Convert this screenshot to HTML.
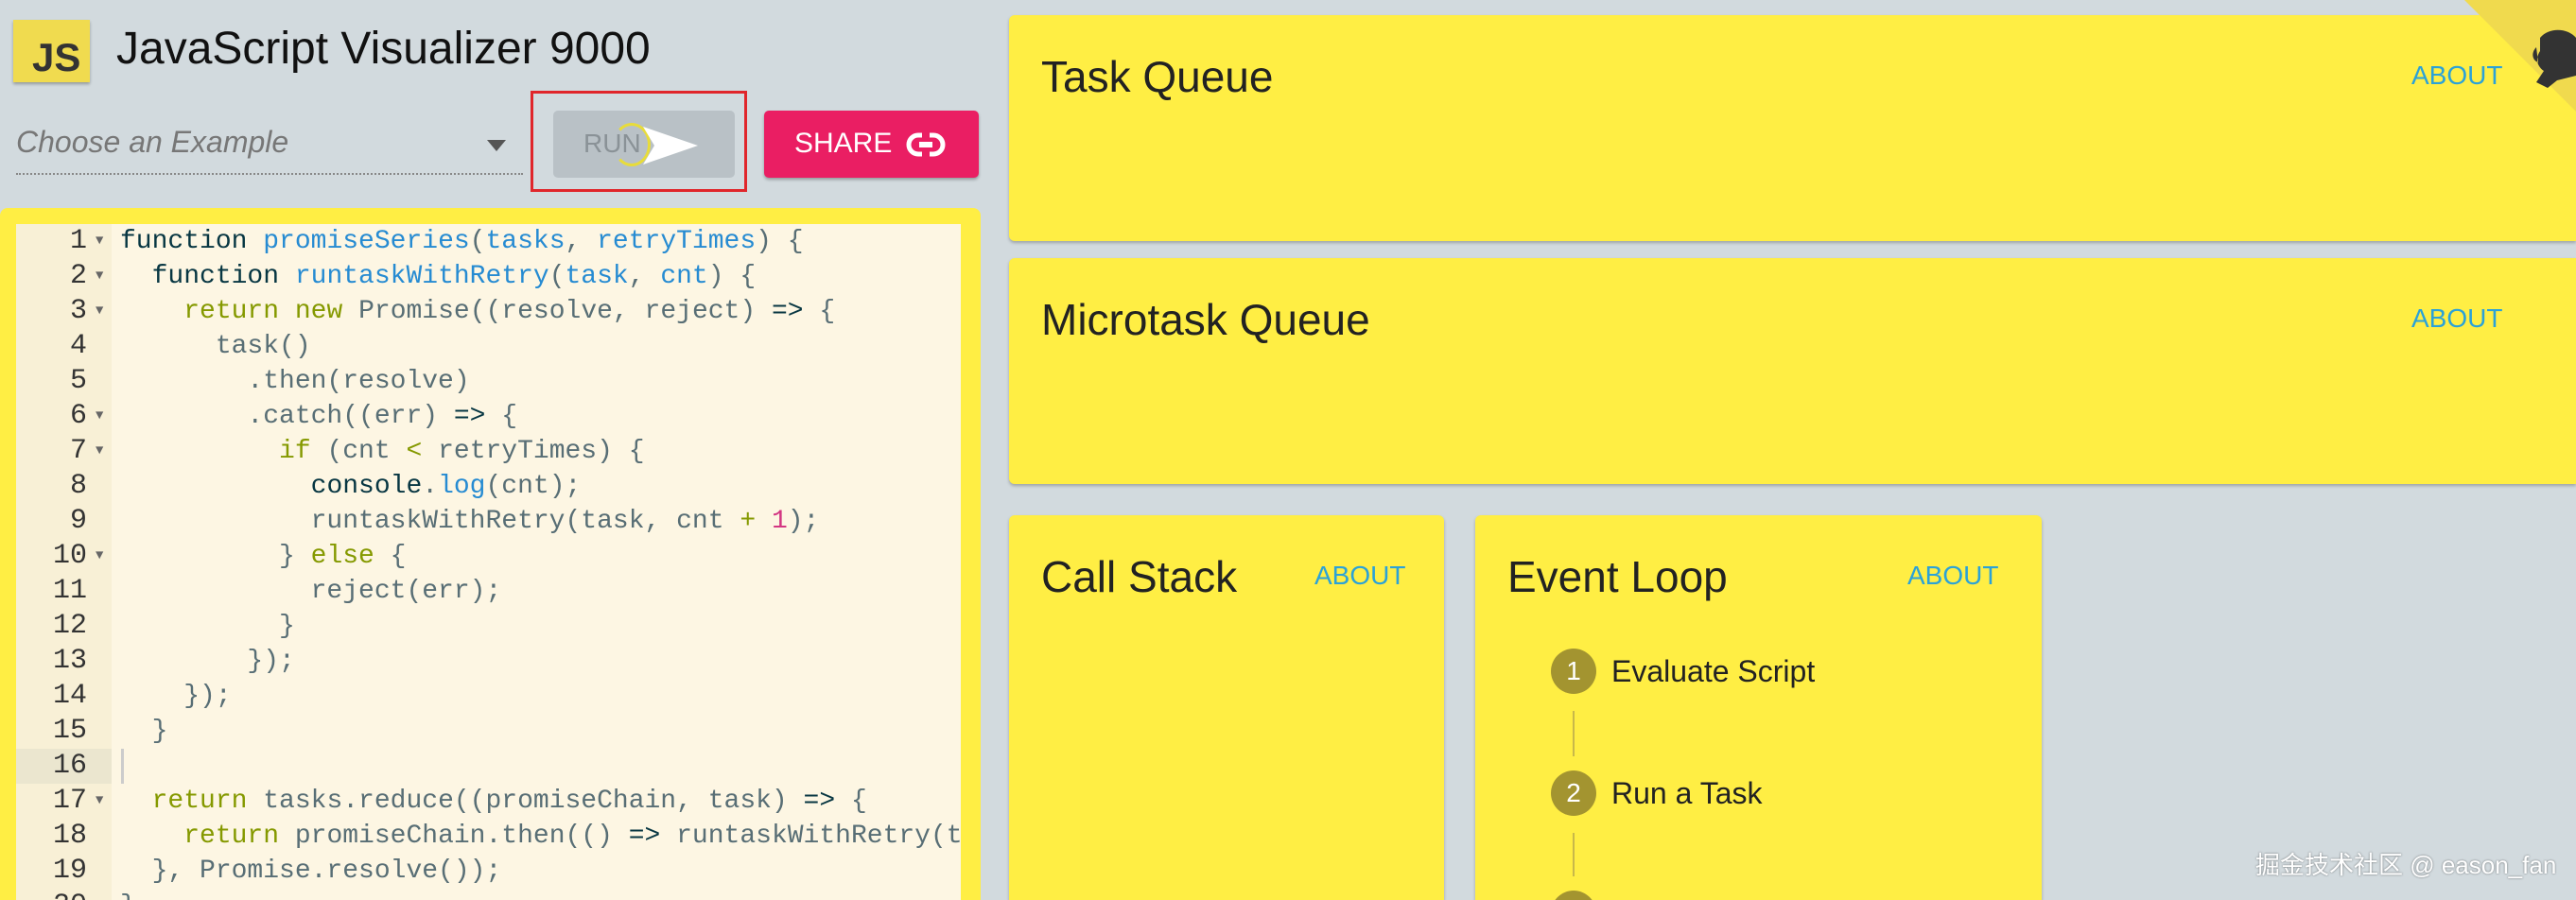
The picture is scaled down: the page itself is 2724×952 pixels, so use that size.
<!DOCTYPE html>
<html style="width:2724px;height:952px;overflow:hidden"><head><meta charset="utf-8"><style>
*{margin:0;padding:0;box-sizing:border-box}
body{width:2724px;height:952px;overflow:hidden;background:#d2dade;font-family:"Liberation Sans",sans-serif;position:relative}
.abs{position:absolute}
.card{position:absolute;background:#ffee44;border-radius:6px;box-shadow:0 2px 3px rgba(0,0,0,.25)}
.card h2{position:absolute;left:34px;font-weight:normal;font-size:46px;color:#222;line-height:1}
.about{position:absolute;font-size:28px;color:#2ba2d8;line-height:1}
.code{position:absolute;left:17px;top:237px;width:999px;height:715px;background:#fdf6e3;overflow:hidden;font-family:"Liberation Mono",monospace;font-size:28px}
.gut{position:absolute;left:0;top:0;width:101px;height:100%;background:#f8f0d6}
.ln{position:absolute;left:0;width:101px;height:37px;line-height:37px;color:#333;font-size:30px}
.ln span{position:absolute;right:26px}
.ln i{position:absolute;left:84px;font-style:normal;font-size:14px;color:#666}
.l{position:absolute;left:110px;height:37px;line-height:37px;white-space:pre;color:#586e75}
.k{color:#859900}.f{color:#268bd2}.d{color:#073642}.n{color:#d33682}
.step{position:absolute;left:1640px;width:48px;height:48px;border-radius:50%;background:#a39430;color:#fff;font-size:28px;text-align:center;line-height:48px}
.st{position:absolute;left:1704px;font-size:32px;color:#222;line-height:1}
.vl{position:absolute;left:1663px;width:2px;background:#c8b84a}
</style></head><body>
<div class="abs" style="left:14px;top:21px;width:81px;height:66px;background:#f0db4f;box-shadow:0 2px 3px rgba(0,0,0,.3)"></div>
<div class="abs" style="left:34px;top:40px;font-size:42px;font-weight:bold;color:#333;line-height:1">JS</div>
<div class="abs" style="left:123px;top:24px;font-size:48px;color:#111">JavaScript Visualizer 9000</div>
<div class="abs" style="left:17px;top:132px;font-size:32px;font-style:italic;color:#777">Choose an Example</div>
<div class="abs" style="left:515px;top:148px;width:0;height:0;border-left:10px solid transparent;border-right:10px solid transparent;border-top:12px solid #555"></div>
<div class="abs" style="left:17px;top:183px;width:536px;border-top:2px dotted #888"></div>
<div class="abs" style="left:561px;top:96px;width:229px;height:107px;border:3px solid #e0262b"></div>
<div class="abs" style="left:585px;top:117px;width:192px;height:71px;background:#b9c1c6;border-radius:5px"></div>
<div class="abs" style="left:617px;top:136px;font-size:28px;color:#8a9297">RUN</div>
<div class="abs" style="left:648px;top:130px;width:40px;height:46px;border:3px solid #e8dc3a;border-left-color:transparent;border-radius:50%"></div>
<svg class="abs" style="left:680px;top:134px" width="58" height="40"><path d="M0 0L58 20L0 40L12 20Z" fill="#fff"/></svg>
<div class="abs" style="left:808px;top:117px;width:227px;height:71px;background:#ea1e63;border-radius:5px;box-shadow:0 2px 3px rgba(0,0,0,.3)"></div>
<div class="abs" style="left:840px;top:135px;font-size:30px;color:#fff">SHARE</div>
<svg class="abs" style="left:958px;top:140px" width="42" height="26"><rect x="3" y="3" width="36" height="20" rx="10" fill="none" stroke="#fff" stroke-width="5"/><rect x="17" y="0" width="8" height="26" fill="#ea1e63"/><rect x="14" y="10" width="14" height="6" fill="#fff"/></svg>
<div class="abs" style="left:0;top:220px;width:1037px;height:732px;background:#ffee44;border-radius:8px 8px 0 0"></div>
<div class="code">
<div class="gut"></div>
<div class="abs" style="left:0;top:555px;width:101px;height:37px;background:#ebe6cf"></div>
<div class="abs" style="left:111px;top:555px;width:3px;height:37px;background:#ccc"></div>
<div class="ln" style="top:0"><span>1</span><i>▼</i></div>
<div class="ln" style="top:37px"><span>2</span><i>▼</i></div>
<div class="ln" style="top:74px"><span>3</span><i>▼</i></div>
<div class="ln" style="top:111px"><span>4</span></div>
<div class="ln" style="top:148px"><span>5</span></div>
<div class="ln" style="top:185px"><span>6</span><i>▼</i></div>
<div class="ln" style="top:222px"><span>7</span><i>▼</i></div>
<div class="ln" style="top:259px"><span>8</span></div>
<div class="ln" style="top:296px"><span>9</span></div>
<div class="ln" style="top:333px"><span>10</span><i>▼</i></div>
<div class="ln" style="top:370px"><span>11</span></div>
<div class="ln" style="top:407px"><span>12</span></div>
<div class="ln" style="top:444px"><span>13</span></div>
<div class="ln" style="top:481px"><span>14</span></div>
<div class="ln" style="top:518px"><span>15</span></div>
<div class="ln" style="top:555px"><span>16</span></div>
<div class="ln" style="top:592px"><span>17</span><i>▼</i></div>
<div class="ln" style="top:629px"><span>18</span></div>
<div class="ln" style="top:666px"><span>19</span></div>
<div class="ln" style="top:703px"><span>20</span></div>
<div class="l" style="top:0"><span class="d">function</span> <span class="f">promiseSeries</span>(<span class="f">tasks</span>, <span class="f">retryTimes</span>) {</div>
<div class="l" style="top:37px">  <span class="d">function</span> <span class="f">runtaskWithRetry</span>(<span class="f">task</span>, <span class="f">cnt</span>) {</div>
<div class="l" style="top:74px">    <span class="k">return</span> <span class="k">new</span> Promise((resolve, reject) <span class="d">=&gt;</span> {</div>
<div class="l" style="top:111px">      task()</div>
<div class="l" style="top:148px">        .then(resolve)</div>
<div class="l" style="top:185px">        .catch((err) <span class="d">=&gt;</span> {</div>
<div class="l" style="top:222px">          <span class="k">if</span> (cnt <span class="k">&lt;</span> retryTimes) {</div>
<div class="l" style="top:259px">            <span class="d">console</span>.<span class="f">log</span>(cnt);</div>
<div class="l" style="top:296px">            runtaskWithRetry(task, cnt <span class="k">+</span> <span class="n">1</span>);</div>
<div class="l" style="top:333px">          } <span class="k">else</span> {</div>
<div class="l" style="top:370px">            reject(err);</div>
<div class="l" style="top:407px">          }</div>
<div class="l" style="top:444px">        });</div>
<div class="l" style="top:481px">    });</div>
<div class="l" style="top:518px">  }</div>
<div class="l" style="top:592px">  <span class="k">return</span> tasks.reduce((promiseChain, task) <span class="d">=&gt;</span> {</div>
<div class="l" style="top:629px">    <span class="k">return</span> promiseChain.then(() <span class="d">=&gt;</span> runtaskWithRetry(task, cnt));</div>
<div class="l" style="top:666px">  }, Promise.resolve());</div>
<div class="l" style="top:703px">}</div>
</div>
<div class="card" style="left:1067px;top:16px;width:1657px;height:239px;border-radius:6px 0 0 6px"><h2 style="top:42px">Task Queue</h2><div class="about" style="left:1483px;top:50px">ABOUT</div></div>
<div class="card" style="left:1067px;top:273px;width:1657px;height:239px;border-radius:6px 0 0 6px"><h2 style="top:42px">Microtask Queue</h2><div class="about" style="left:1483px;top:50px">ABOUT</div></div>
<div class="card" style="left:1067px;top:545px;width:460px;height:407px;border-radius:6px 6px 0 0"><h2 style="top:42px">Call Stack</h2><div class="about" style="left:323px;top:50px">ABOUT</div></div>
<div class="card" style="left:1560px;top:545px;width:599px;height:407px;border-radius:6px 6px 0 0"><h2 style="top:42px">Event Loop</h2><div class="about" style="left:457px;top:50px">ABOUT</div></div>
<div class="step" style="top:686px">1</div><div class="st" style="top:694px">Evaluate Script</div>
<div class="vl" style="top:752px;height:48px"></div>
<div class="step" style="top:815px">2</div><div class="st" style="top:823px">Run a Task</div>
<div class="vl" style="top:881px;height:46px"></div>
<div class="step" style="top:942px"></div>
<svg class="abs" style="left:2606px;top:0" width="118" height="118"><path d="M0 0L118 0L118 118Z" fill="#f0da4e"/><path d="M80 40c10-12 30-10 38 0v40l-20 5-10 8-12-6 8-12c-6-4-10-12-4-21z M76 50c-6 6-4 14 2 16" fill="#333"/></svg>
<div class="abs" style="left:2385px;top:895px;font-size:26px;color:#fff;text-shadow:0 0 2px rgba(0,0,0,.5);font-family:'Liberation Sans','Noto Sans CJK SC',sans-serif">掘金技术社区 @ eason_fan</div>
</body></html>
